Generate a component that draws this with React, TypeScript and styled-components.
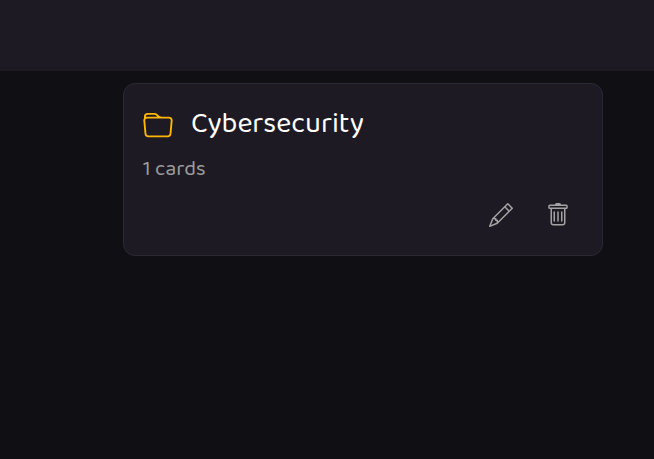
import React from "react";
import styled, { createGlobalStyle } from "styled-components";
import { BsFolder, BsPencil, BsTrash } from "react-icons/bs";

const GlobalStyle = createGlobalStyle`
  * { box-sizing: border-box; }
  body { margin: 0; background: #100f14; font-family: "Baloo 2", "Open Sans", "Noto Sans", sans-serif; }
`;

const Page = styled.div`
  height: 459px;
  overflow: hidden;
  background: #100f14;
`;

const TopBar = styled.header`
  height: 71px;
  background: #1d1a24;
`;

const Deck = styled.article`
  display: flex;
  flex-direction: column;
  width: 480px;
  height: 173px;
  margin: 12px 0 0 123px;
  padding: 20px 32px 28px 19px;
  border: 1px solid #2b2933;
  border-radius: 12px;
  background: #1d1a24;
`;

const Heading = styled.div`
  display: flex;
  align-items: flex-start;
  height: 40px;
  gap: 18px;
  color: #ffb700;
`;

const FolderIcon = styled(BsFolder)`
  flex: none;
  margin-top: 7px;
`;

const Title = styled.h2`
  margin: 0;
  font-size: 28.8px;
  font-weight: 400;
  line-height: 40px;
  color: #fff;
  white-space: nowrap;
`;

const Count = styled.p`
  margin: 10px 0 0;
  font-size: 21.6px;
  line-height: 30px;
  color: #9b9b9b;
`;

const Actions = styled.div`
  display: flex;
  justify-content: flex-end;
  gap: 33px;
  margin-top: auto;
`;

const IconButton = styled.button`
  display: flex;
  padding: 0;
  border: 0;
  background: none;
  color: #a3a3a3;
`;

export default function App() {
  return (
    <Page>
      <GlobalStyle />
      <TopBar />
      <Deck>
        <Heading>
          <FolderIcon size={30} />
          <Title>Cybersecurity</Title>
        </Heading>
        <Count>1 cards</Count>
        <Actions>
          <IconButton aria-label="Edit"><BsPencil size={24} /></IconButton>
          <IconButton aria-label="Delete"><BsTrash size={24} /></IconButton>
        </Actions>
      </Deck>
    </Page>
  );
}
